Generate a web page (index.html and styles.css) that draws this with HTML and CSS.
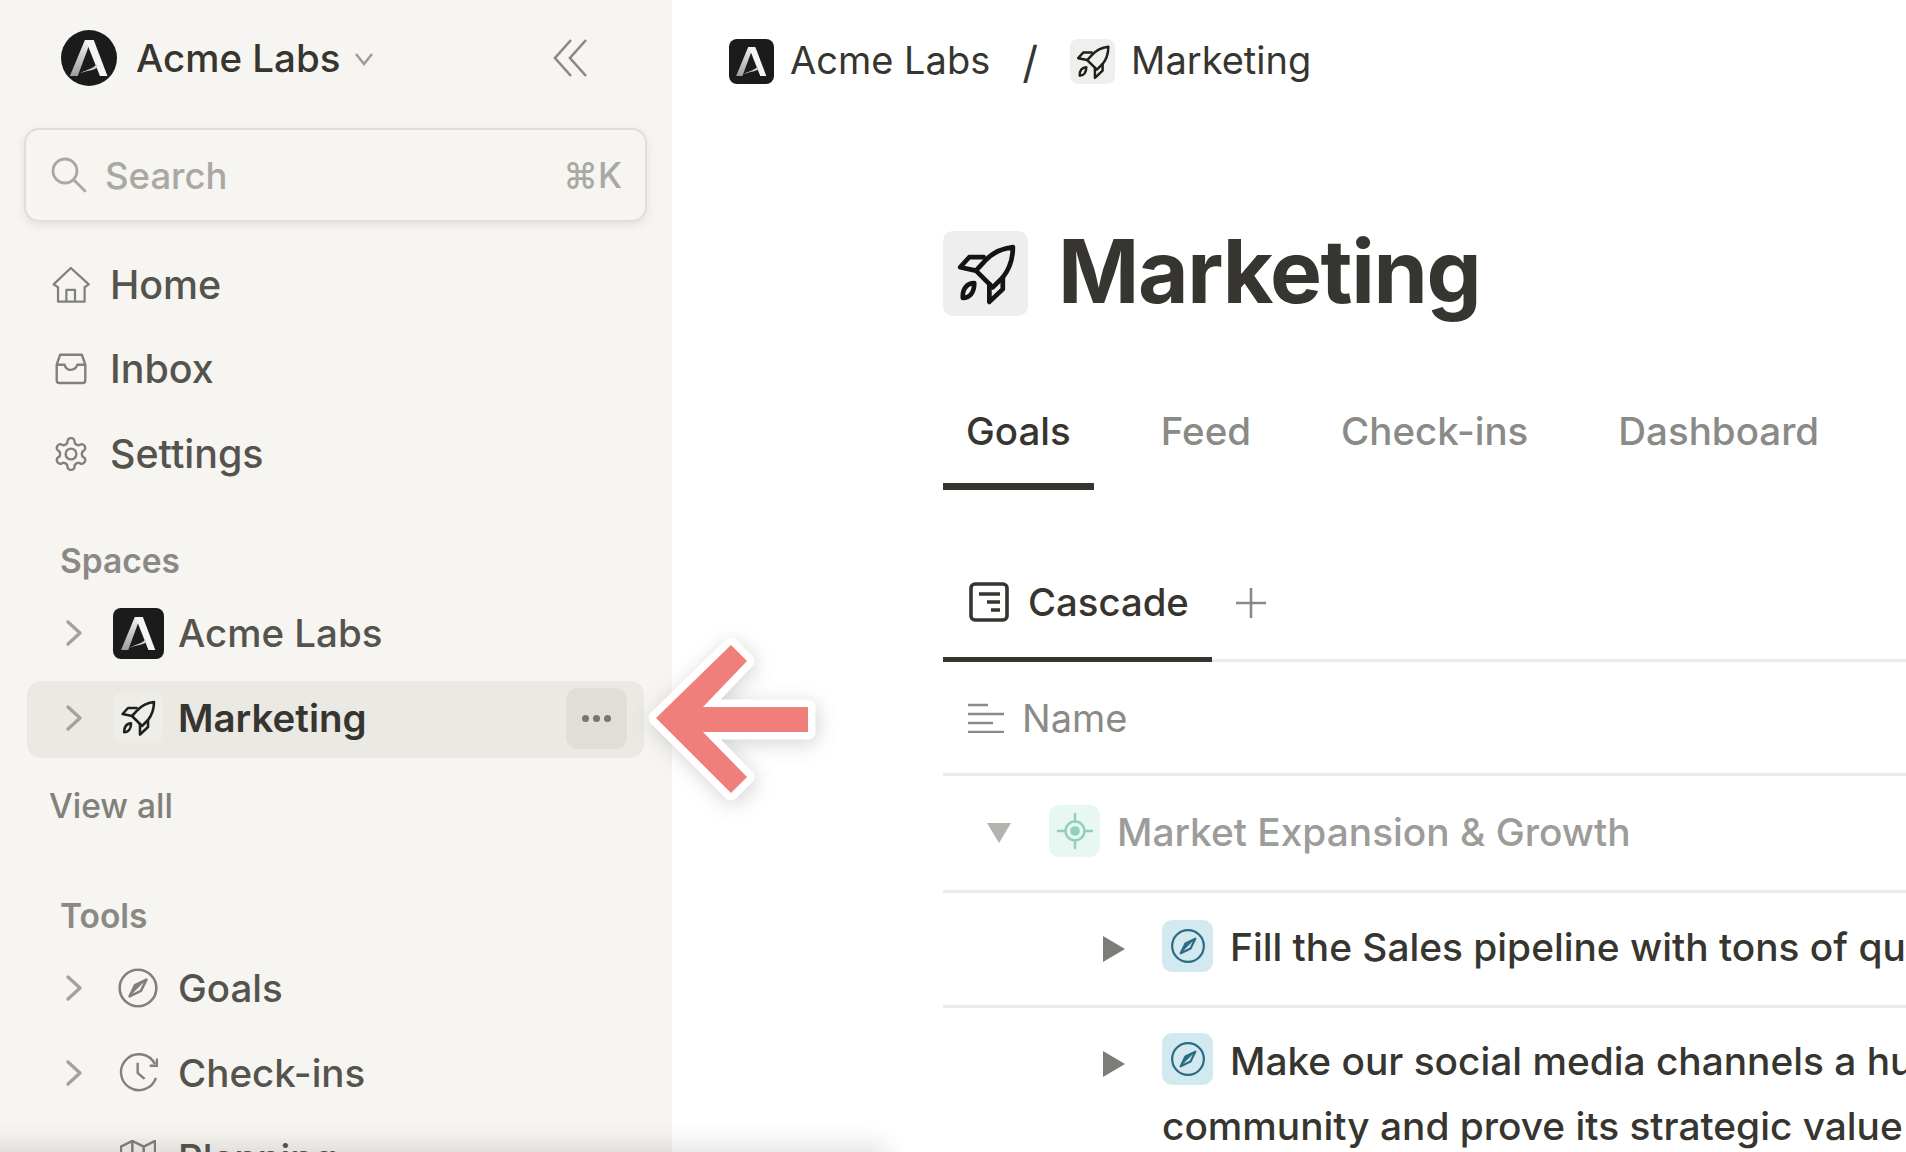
FILE: index.html
```html
<!DOCTYPE html>
<html>
<head>
  <meta charset="utf-8">
  <title>Marketing</title>
  <link rel="stylesheet" href="styles.css">
</head>
<body>
  <svg class="defs" width="0" height="0">
    <defs>
      <linearGradient id="acme-left" x1="0" y1="0" x2="0" y2="1">
        <stop offset="0" stop-color="#f2f2f0"/>
        <stop offset="1" stop-color="#9d9d9b"/>
      </linearGradient>
      <symbol id="acme" viewBox="36 33 164 164">
        <path fill="url(#acme-left)" d="M106 62H124L85 168H62Z"/>
        <path fill="#f4f4f2" d="M108 62H132L172 168H150Z"/>
        <path fill="#cfcfcd" d="M88 162C105 150 125 150 140 134L144 143C128 153 108 152 88 162Z"/>
      </symbol>
      <symbol id="rocket" viewBox="10 20 250 250">
        <g fill="none" stroke="currentColor" stroke-linejoin="round" stroke-linecap="round">
          <path d="M215 65C175 70 150 85 130 108L105 135L155 185L185 155C205 130 215 100 215 65Z"/>
          <path d="M128 95H85L58 125L105 135"/>
          <path d="M185 155V190L145 228V175"/>
          <path d="M100 172C78 172 64 190 66 216C88 216 100 198 100 172Z"/>
        </g>
      </symbol>
      <symbol id="compass" viewBox="0 0 24 24">
        <circle cx="12" cy="12" r="10" fill="none" stroke="currentColor" stroke-width="1.4"/>
        <path d="M16.6 7.4L13.6 13.6L7.4 16.6L10.4 10.4Z" fill="none" stroke="currentColor" stroke-width="1.4" stroke-linejoin="round"/>
        <path d="M16.6 7.4L7.4 16.6L10.4 10.4Z" fill="currentColor"/>
      </symbol>
      <symbol id="chevron" viewBox="0 0 18 28">
        <path d="M3 3L15 14L3 25" fill="none" stroke="currentColor" stroke-width="3.4" stroke-linejoin="round" stroke-linecap="round"/>
      </symbol>
    </defs>
  </svg>

  <div class="page">
    <aside class="sidebar">
      <header class="workspace">
        <span class="logo logo-round"><svg><use href="#acme"/></svg></span>
        <span class="workspace-name">Acme Labs</span>
        <svg class="workspace-caret" width="20" height="14" viewBox="0 0 20 14"><path d="M2 2L10 12L18 2" fill="none" stroke="currentColor" stroke-width="2.4"/></svg>
        <svg class="collapse" width="34" height="38" viewBox="0 0 34 38"><path d="M18 1L2 19L18 37M33 1L17 19L33 37" fill="none" stroke="currentColor" stroke-width="2.6"/></svg>
      </header>

      <div class="search">
        <svg width="36" height="36" viewBox="0 0 36 36"><circle cx="14" cy="14" r="12" fill="none" stroke="currentColor" stroke-width="2.8"/><path d="M23 23L34 34" stroke="currentColor" stroke-width="2.8" stroke-linecap="round"/></svg>
        <span class="search-label">Search</span>
        <span class="search-key">⌘K</span>
      </div>

      <nav class="main-nav">
        <a class="nav-item">
          <span class="nav-icon"><svg width="42" height="40" viewBox="30 45 125 120"><path d="M52 112L38 103L92 52L148 103L135 112V157H52ZM78 157V120H105V157" fill="none" stroke="currentColor" stroke-width="7" stroke-linejoin="round"/></svg></span>
          Home
        </a>
        <a class="nav-item">
          <span class="nav-icon"><svg width="32" height="32" viewBox="47 311 93 93"><path d="M62 316H125L135 345V390A8 8 0 0 1 127 398H60A8 8 0 0 1 52 390V345ZM52 345H75C80 365 105 365 112 345H135" fill="none" stroke="currentColor" stroke-width="7" stroke-linejoin="round"/></svg></span>
          Inbox
        </a>
        <a class="nav-item">
          <span class="nav-icon"><svg width="38" height="38" viewBox="0 0 24 24"><g fill="none" stroke="currentColor" stroke-width="1.5"><path d="M12.22 2h-.44a2 2 0 0 0-2 2v.18a2 2 0 0 1-1 1.73l-.43.25a2 2 0 0 1-2 0l-.15-.08a2 2 0 0 0-2.73.73l-.22.38a2 2 0 0 0 .73 2.73l.15.1a2 2 0 0 1 1 1.72v.51a2 2 0 0 1-1 1.74l-.15.09a2 2 0 0 0-.73 2.73l.22.38a2 2 0 0 0 2.73.73l.15-.08a2 2 0 0 1 2 0l.43.25a2 2 0 0 1 1 1.73V20a2 2 0 0 0 2 2h.44a2 2 0 0 0 2-2v-.18a2 2 0 0 1 1-1.73l.43-.25a2 2 0 0 1 2 0l.15.08a2 2 0 0 0 2.73-.73l.22-.39a2 2 0 0 0-.73-2.73l-.15-.08a2 2 0 0 1-1-1.74v-.5a2 2 0 0 1 1-1.74l.15-.09a2 2 0 0 0 .73-2.73l-.22-.38a2 2 0 0 0-2.73-.73l-.15.08a2 2 0 0 1-2 0l-.43-.25a2 2 0 0 1-1-1.73V4a2 2 0 0 0-2-2z"/><circle cx="12" cy="12" r="3.4"/></g></svg></span>
          Settings
        </a>
      </nav>

      <h2 class="section-title section-spaces">Spaces</h2>
      <ul class="tree">
        <li class="tree-item">
          <svg class="tree-chevron"><use href="#chevron"/></svg>
          <span class="logo logo-square"><svg><use href="#acme"/></svg></span>
          Acme Labs
        </li>
        <li class="tree-item is-active">
          <svg class="tree-chevron"><use href="#chevron"/></svg>
          <span class="tree-glyph tree-glyph-rocket"><svg width="50" height="50"><use href="#rocket"/></svg></span>
          Marketing
          <span class="more"><i></i><i></i><i></i></span>
        </li>
      </ul>
      <a class="view-all">View all</a>

      <h2 class="section-title section-tools">Tools</h2>
      <ul class="tree">
        <li class="tree-item">
          <svg class="tree-chevron"><use href="#chevron"/></svg>
          <span class="tree-glyph"><svg width="44" height="44"><use href="#compass"/></svg></span>
          Goals
        </li>
        <li class="tree-item">
          <svg class="tree-chevron"><use href="#chevron"/></svg>
          <span class="tree-glyph"><svg width="40" height="40" viewBox="28 280 116 116"><path d="M138 352A52 52 0 1 1 135 312M141 296V317H120M85 308V338L105 355" fill="none" stroke="currentColor" stroke-width="7"/></svg></span>
          Check-ins
        </li>
        <li class="tree-item">
          <svg class="tree-chevron tree-chevron-hidden"><use href="#chevron"/></svg>
          <span class="tree-glyph"><svg width="36" height="36" viewBox="2.5 2.5 19 19"><path d="M3 6L9 3L15 6L21 3V18L15 21L9 18L3 21ZM9 3V18M15 6V21" fill="none" stroke="currentColor" stroke-width="1.3" stroke-linejoin="round"/></svg></span>
          Planning
        </li>
      </ul>
    </aside>

    <main class="content">
      <div class="crumbs">
        <span class="logo logo-crumb"><svg><use href="#acme"/></svg></span>
        <span class="crumb-text">Acme Labs</span>
        <span class="crumb-sep">/</span>
        <span class="crumb-box"><svg width="48" height="48"><use href="#rocket"/></svg></span>
        <span class="crumb-text">Marketing</span>
      </div>

      <section class="space">
        <div class="space-head">
          <span class="space-icon"><svg width="84" height="84"><use href="#rocket"/></svg></span>
          <h1>Marketing</h1>
        </div>

        <div class="tabs">
          <a class="tab is-active">Goals</a>
          <a class="tab">Feed</a>
          <a class="tab">Check-ins</a>
          <a class="tab">Dashboard</a>
        </div>

        <div class="views">
          <a class="view is-active">
            <svg width="40" height="40" viewBox="0 0 40 40"><rect x="2" y="2" width="36" height="36" rx="4" fill="none" stroke="currentColor" stroke-width="3.6"/><path d="M10 12H31M18 20H31M22 28H31" stroke="currentColor" stroke-width="3.6"/></svg>
            Cascade
          </a>
          <svg class="view-add" width="32" height="32" viewBox="0 0 32 32"><path d="M16 1V31M1 16H31" stroke="currentColor" stroke-width="2.6"/></svg>
        </div>

        <div class="row row-head">
          <svg width="36" height="30" viewBox="0 0 36 30"><path d="M0 2H20M0 11H36M0 20H25M0 29H36" stroke="currentColor" stroke-width="2.6"/></svg>
          Name
        </div>

        <div class="row row-group">
          <svg class="caret caret-down" width="24" height="20" viewBox="0 0 24 20"><path d="M0 0H24L12 20Z" fill="currentColor"/></svg>
          <span class="badge badge-green">
            <svg width="40" height="40" viewBox="-20 -20 40 40"><circle r="9.5" fill="none" stroke="currentColor" stroke-width="2.4"/><circle r="4.8" fill="currentColor"/><path d="M0 -17V-9.5M0 9.5V17M-17 0H-9.5M9.5 0H17" stroke="currentColor" stroke-width="2.4" stroke-linecap="round"/></svg>
          </span>
          Market Expansion &amp; Growth
        </div>

        <div class="row row-goal">
          <svg class="caret" width="22" height="26" viewBox="0 0 22 26"><path d="M0 0L22 13L0 26Z" fill="currentColor"/></svg>
          <span class="badge badge-blue"><svg width="38" height="38"><use href="#compass"/></svg></span>
          Fill the Sales pipeline with tons of qualified leads
        </div>

        <div class="row row-goal row-wrap">
          <svg class="caret" width="22" height="26" viewBox="0 0 22 26"><path d="M0 0L22 13L0 26Z" fill="currentColor"/></svg>
          <p class="goal-text">
            <span class="badge badge-blue badge-inline"><svg width="38" height="38"><use href="#compass"/></svg></span>Make our social media channels a hub for the<br>
            community and prove its strategic value
          </p>
        </div>
      </section>
    </main>

    <svg class="arrow" width="190" height="190" viewBox="640 630 190 190">
      <path d="M656 718L731 645L747 661L703 707H808V732H703L747 777L731 793Z" fill="#f07f7b" stroke="#fff" stroke-width="15" stroke-linejoin="round" paint-order="stroke"/>
    </svg>
    <div class="bottom-shade"></div>
  </div>
</body>
</html>
```

FILE: styles.css
```css
* { box-sizing: border-box; }

html, body {
  margin: 0;
  padding: 0;
  background: #fff;
  overflow: hidden;
}

body {
  font-family: "Inter", "DejaVu Sans", sans-serif;
  color: #37352f;
}

.defs { position: absolute; }

.page {
  position: relative;
  display: flex;
  width: 1906px;
  height: 1152px;
  overflow: hidden;
}

/* sidebar */

.sidebar {
  flex: none;
  width: 672px;
  height: 1152px;
  overflow: hidden;
  background: #f7f5f1;
  color: #55534e;
  font-size: 38.5px;
  font-weight: 500;
}

.logo {
  display: flex;
  flex: none;
  align-items: center;
  justify-content: center;
  background: #1b1b1b;
}
.logo svg { width: 100%; height: 100%; }
.logo-round { width: 56px; height: 56px; border-radius: 50%; }
.logo-square { width: 51px; height: 51px; border-radius: 8px; margin: 0 14px 0 0; }
.logo-crumb { width: 45px; height: 45px; border-radius: 8px; }

.workspace {
  display: flex;
  align-items: center;
  height: 116px;
  padding-left: 61px;
}
.workspace-name {
  margin-left: 19px;
  color: #37352f;
}
.workspace-caret {
  margin-left: 14px;
  margin-top: 2px;
  color: #9c9b96;
}
.collapse {
  margin-left: 179px;
  color: #8a8985;
}

.search {
  display: flex;
  align-items: center;
  width: 623px;
  height: 94px;
  margin: 12px 0 0 24px;
  padding: 0 23px 0 25px;
  border: 2.5px solid #e0ded9;
  border-radius: 15px;
  box-shadow: 0 3px 8px rgba(55, 53, 47, 0.1);
  color: #a9a8a3;
}
.search-label {
  margin-left: 18px;
  padding-top: 2px;
  font-size: 36.5px;
}
.search-key { margin-left: auto; font-size: 35px; }

.main-nav { margin-top: 20px; }

.nav-item {
  display: flex;
  align-items: center;
  height: 84.5px;
  padding-top: 1px;
  padding-left: 51px;
  font-size: 39.4px;
}
.nav-icon {
  display: flex;
  flex: none;
  align-items: center;
  justify-content: center;
  width: 40px;
  margin-right: 19px;
  color: #81807b;
}

.section-title {
  margin: 0;
  padding-left: 60px;
  color: #8a8985;
  font-size: 33.5px;
  font-weight: 600;
  line-height: 60px;
}
.section-spaces { margin-top: 35px; }
.section-tools { margin-top: 50px; }

.tree {
  margin: 5px 0 0;
  padding: 0;
  list-style: none;
}
.tree-item {
  display: flex;
  align-items: center;
  width: 617px;
  height: 77px;
  margin: 0 0 8px 27px;
  padding-left: 37px;
  padding-bottom: 2px;
  border-radius: 14px;
}
.tree-item.is-active {
  background: #ebe9e3;
  color: #37352f;
  font-weight: 600;
}
.tree-chevron {
  flex: none;
  width: 20px;
  height: 28px;
  margin-right: 29px;
  color: #a3a29d;
}
.tree-chevron-hidden { visibility: hidden; }
.tree-glyph {
  display: flex;
  flex: none;
  align-items: center;
  justify-content: center;
  width: 50px;
  height: 50px;
  margin-right: 15px;
  border-radius: 8px;
  color: #81807b;
}
.tree-glyph svg { flex: none; }
.tree-glyph-rocket {
  background: #efede8;
  color: #1f1f1d;
}

.more {
  display: flex;
  align-items: center;
  justify-content: center;
  gap: 4px;
  width: 61px;
  height: 61px;
  margin-left: auto;
  margin-right: 17px;
  border-radius: 12px;
  background: #e0ded6;
}
.more i {
  width: 7px;
  height: 7px;
  border-radius: 50%;
  background: #77766f;
}

.view-all {
  display: block;
  padding-left: 49px;
  margin-top: 18px;
  color: #81807b;
  font-size: 33.5px;
  line-height: 60px;
}

/* main area */

.content {
  flex: 1;
  min-width: 0;
  overflow: hidden;
}

.crumbs {
  display: flex;
  align-items: center;
  height: 123px;
  padding-left: 57px;
  font-size: 38px;
}
.crumb-text {
  margin-left: 16px;
  padding-bottom: 3px;
}
.crumb-sep {
  margin: 0 32px;
  font-size: 44px;
}
.crumb-box {
  display: flex;
  align-items: center;
  justify-content: center;
  width: 45px;
  height: 45px;
  border-radius: 8px;
  background: #efefee;
  color: #1f1f1d;
}
.crumb-box svg { flex: none; }

.space { margin: 108px 0 0 271px; }

.space-head {
  display: flex;
  align-items: center;
  height: 85px;
}
.space-icon {
  display: flex;
  flex: none;
  align-items: center;
  justify-content: center;
  width: 85px;
  height: 85px;
  border-radius: 10px;
  background: #eeeeee;
  color: #141412;
}
.space-head h1 {
  margin: 0 0 6px 30px;
  font-size: 87.3px;
  font-weight: 700;
  letter-spacing: -1.4px;
  white-space: nowrap;
}

/* rocket line weight, the symbol takes it from here */
.tree-glyph-rocket svg,
.crumb-box svg { stroke-width: 13; }
.space-icon svg { stroke-width: 14; }

.tabs {
  display: flex;
  gap: 44px;
  margin-top: 63px;
}
.tab {
  padding: 0 23px;
  border-bottom: 7px solid transparent;
  color: #8a8a87;
  font-size: 38.5px;
  font-weight: 500;
  line-height: 104px;
  white-space: nowrap;
}
.tab.is-active {
  border-bottom-color: #37352f;
  color: #37352f;
}

.views {
  display: flex;
  align-items: center;
  margin-top: 61px;
  border-bottom: 3px solid #ebebea;
  height: 111px;
}
.view {
  display: flex;
  align-items: center;
  gap: 19px;
  height: 111px;
  margin-bottom: -3px;
  padding: 0 23px 5px 26px;
  border-bottom: 5px solid #37352f;
  font-size: 38.3px;
  font-weight: 500;
}
.view-add {
  margin-left: 23px;
  margin-bottom: 4px;
  color: #8a8985;
}

.row {
  display: flex;
  align-items: center;
  border-bottom: 3px solid #ebebea;
  font-size: 38.85px;
  font-weight: 500;
  white-space: nowrap;
}
.row-head {
  gap: 18px;
  height: 114px;
  padding-left: 25px;
  color: #8a8a87;
  font-size: 38px;
  font-weight: 400;
}
.row-group {
  height: 117px;
  padding: 0 0 4px 44px;
  color: #9c9c99;
}
.row-group .caret { margin-top: 4px; }
.row-goal {
  height: 115px;
  padding: 0 0 6px 160px;
}
.row-goal .caret {
  margin-top: 5px;
  margin-right: 37px;
}
.row-wrap {
  align-items: flex-start;
  height: auto;
  padding-top: 20px;
}

.caret {
  flex: none;
  margin-right: 38px;
  color: #7d7c77;
}
.caret-down { color: #b3b3b0; }
.row-wrap .caret { margin-top: 23px; }

.badge {
  display: flex;
  flex: none;
  align-items: center;
  justify-content: center;
  width: 51px;
  height: 52px;
  margin-right: 17px;
  border-radius: 10px;
}
.badge-green {
  background: #e9f7f2;
  color: #8fd0ba;
}
.badge-blue {
  background: #d3e9f0;
  color: #2d6b84;
}
.badge-inline {
  display: inline-flex;
  vertical-align: middle;
  margin-top: -10px;
}

.goal-text {
  margin: 0;
  line-height: 65px;
}

/* things on top of the page */

.arrow {
  position: absolute;
  left: 640px;
  top: 630px;
  overflow: visible;
  filter: drop-shadow(2px 4px 10px rgba(60, 60, 60, 0.22));
}

.bottom-shade {
  position: absolute;
  left: -40px;
  bottom: -16px;
  width: 920px;
  height: 16px;
  box-shadow: 0 0 24px 6px rgba(60, 58, 50, 0.16);
}
```
